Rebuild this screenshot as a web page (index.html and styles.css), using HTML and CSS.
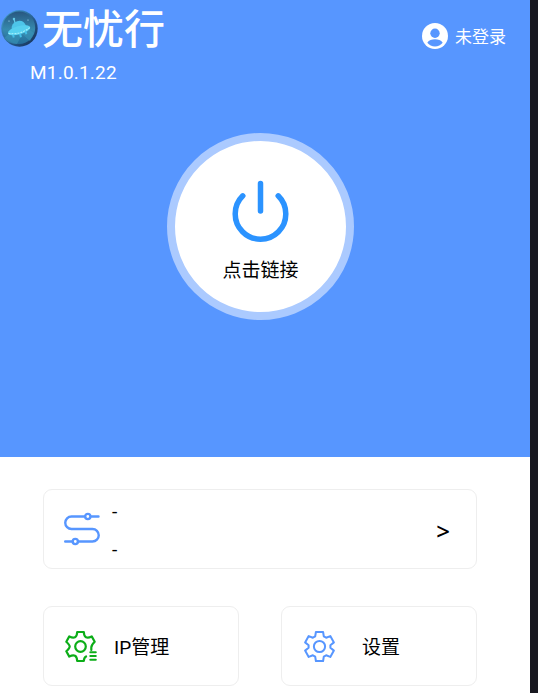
FILE: index.html
```html
<!DOCTYPE html>
<html lang="zh-CN">
<head>
<meta charset="utf-8">
<title>无忧行</title>
<link rel="stylesheet" href="styles.css">
</head>
<body>
<div class="app">
  <section class="hero">
    <header class="top">
      <div class="brand">
        <svg class="logo" width="37" height="37" viewBox="0 0 37 37">
          <defs>
            <linearGradient id="sky" x1="0" y1="0" x2="0" y2="1"><stop offset="0" stop-color="#285780"/><stop offset=".55" stop-color="#368aae"/><stop offset="1" stop-color="#246d9b"/></linearGradient>
            <linearGradient id="rim" x1="0" y1="0" x2="1" y2="1"><stop offset="0" stop-color="#46a6cf"/><stop offset=".6" stop-color="#245789"/><stop offset="1" stop-color="#14294d"/></linearGradient>
          </defs>
          <circle cx="18.500" cy="18.500" r="18.200" fill="url(#rim)"/>
          <circle cx="18" cy="17.800" r="16.200" fill="url(#sky)"/>
          <path d="M8 24 3 28a17 17 0 0 0 13 6l5-10 8 7 4-8-7-5z" fill="#3d98b9" opacity=".55"/>
          <g transform="rotate(-15 18 20)">
            <path d="M16 8v6" stroke="#64c8e8" stroke-width="1.300"/>
            <circle cx="16" cy="8" r="1.200" fill="#64c8e8"/>
            <path d="M11 18q1-7 7.500-7t7.500 7z" fill="#4dc5e9"/>
            <ellipse cx="18" cy="20.300" rx="11.500" ry="4.200" fill="#56d0ef"/>
            <path d="M7 20.500q11 5 22 0" fill="none" stroke="#a5f0fa" stroke-width="1.200" stroke-dasharray="2 1"/>
            <path d="M11 23v3M18 24v3.500M24 23v3" stroke="#45bee7" stroke-width="2"/>
          </g>
          <circle cx="8" cy="11" r=".6" fill="#b6eaff"/><circle cx="27" cy="10" r=".6" fill="#b6eaff"/>
        </svg>
        <span class="name">无忧行</span>
      </div>
      <div class="user">
        <svg width="26" height="26" viewBox="0 0 26 26">
          <circle cx="13" cy="13" r="13" fill="#fff"/>
          <circle cx="13" cy="10.300" r="4.700" fill="#5796ff"/>
          <path d="M5.300 19.800c1.600-2.700 4.600-3.500 7.700-3.500s6.100.8 7.700 3.500c-1.900 2.400-4.600 3.700-7.700 3.700s-5.800-1.300-7.700-3.700z" fill="#5796ff"/>
        </svg>
        <span>未登录</span>
      </div>
    </header>
    <div class="version">M1.0.1.22</div>
    <div class="power">
      <svg width="61" height="65" viewBox="0 0 61 65" fill="none" stroke="#2b93ff" stroke-width="5.500" stroke-linecap="round">
        <path d="M30.500 4.500v27.500M12.800 16.800a25.300 25.300 0 1 0 35.400 0"/>
      </svg>
      <span>点击链接</span>
    </div>
  </section>
  <main class="panel">
    <div class="card route">
      <svg width="36" height="34" viewBox="0 0 36 34" fill="none" stroke="#5796ff" stroke-width="2.400" stroke-linecap="round">
        <path d="M1.200 29.500H8M14.500 29.500h14a6.250 6.250 0 0 0 0-12.500h-21a6.250 6.250 0 0 1 0-12.500h13M27.500 4.500H34.500"/>
        <circle cx="23.800" cy="4.500" r="2.600"/><circle cx="11.300" cy="29.500" r="2.600"/>
      </svg>
      <div class="lines"><span>-</span><span>-</span></div>
      <span class="arrow">&gt;</span>
    </div>
    <div class="row">
      <div class="card tile ip">
        <svg width="34" height="34" viewBox="-16.500 -17.500 34 34" fill="none" stroke="#0cad18" stroke-width="2.200" stroke-linecap="round" stroke-linejoin="round">
          <path d="M10.800 3.500V1Q10.800-1.500 14.200-4.800L11.200-10.100Q7.500-8.300 5.500-9.300T3.300-14.500H-3.300Q-3.500-10.300-5.500-9.300T-11.200-10.100L-14.200-4.800Q-10.800-1.500-10.800 0T-14.200 4.800L-11.200 10.100Q-7.500 8.300-5.500 9.300T-3.300 14.500H3.300Q3.500 11 5.600 10"/>
          <circle r="5.300"/>
          <path d="M9.800 5.700h5.500M9.800 9.500h5.500M9.800 13.300h5.500" stroke-width="2"/>
        </svg>
        <span>IP管理</span>
      </div>
      <div class="card tile settings">
        <svg width="34" height="34" viewBox="-17.500 -17.500 34 34" fill="none" stroke="#5796ff" stroke-width="2" stroke-linejoin="round">
          <path d="M-3.600-14.500H3.600L4.300-10.100 6.600-8.800 10.800-10.400 14.400-4.100 10.900-1.300V1.300L14.400 4.100 10.800 10.400 6.600 8.800 4.300 10.100 3.600 14.500H-3.600L-4.300 10.100-6.600 8.800-10.800 10.400-14.400 4.100-10.900 1.300V-1.300L-14.400-4.100-10.800-10.400-6.600-8.800-4.300-10.100z"/>
          <circle r="5.600"/>
        </svg>
        <span>设置</span>
      </div>
    </div>
  </main>
</div>
</body>
</html>
```
FILE: styles.css
```css
* { box-sizing: border-box; }
body {
  margin: 0;
  height: 693px;
  overflow: hidden;
  background: #181820;
  font-family: Roboto, "Noto Sans CJK SC", sans-serif;
  color: #000;
}
svg { display: block; flex: none; }
.app { width: 530px; height: 693px; background: #fff; }
.hero {
  height: 457px;
  background: #5796ff;
  color: #fff;
  display: flex;
  flex-direction: column;
}
.top { height: 60px; display: flex; justify-content: space-between; }
.brand { display: flex; padding: 10px 0 0 1px; }
.name {
  margin: 0 0 0 4px;
  font-size: 41px;
  line-height: 40px;
  font-weight: 500;
  white-space: nowrap;
}
.user {
  display: flex;
  align-items: center;
  height: 26px;
  margin: 23px 24px 0 0;
  gap: 7px;
  font-size: 17px;
  line-height: 26px;
}
.user span { padding-top: 2px; }
.version { margin-left: 30px; height: 24px; font-size: 19px; line-height: 25px; letter-spacing: .2px; }
.power {
  width: 187px;
  height: 187px;
  margin: 49px 0 0 167px;
  border: 8px solid #abcaff;
  border-radius: 50%;
  background: #fff;
  display: flex;
  flex-direction: column;
  align-items: center;
  padding-top: 38px;
  color: #000;
  font-size: 19px;
  line-height: 28px;
}
.power span { margin-top: 13px; }
.panel { padding: 32px 53px 0 43px; }
.card { border: 1px solid #eee; border-radius: 9px; height: 80px; display: flex; align-items: center; }
.route { padding: 0 26px 0 20px; }
.lines { height: 78px; margin-left: 12px; display: flex; flex-direction: column; justify-content: center; padding-top: 3px; font-size: 19px; line-height: 38px; }
.arrow { margin-left: auto; font-family: "Noto Sans", sans-serif; font-size: 24px; line-height: 32px; padding-top: 4px; font-weight: 500; }
.row { display: grid; grid-template-columns: 196px 196px; gap: 42px; margin-top: 37px; }
.tile { font-size: 19px; line-height: 28px; }
.tile span { padding-top: 3px; }
.ip { padding-left: 20px; gap: 16px; }
.settings { padding-left: 20px; gap: 26px; }
```
